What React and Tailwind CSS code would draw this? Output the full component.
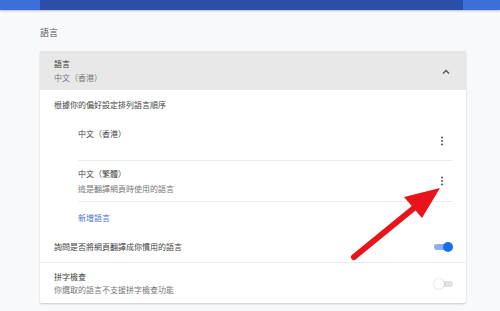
import React from "react";

function Kebab() {
  return (
    <svg width="4" height="10" viewBox="0 0 4 10" className="text-[#5f6368]">
      <circle cx="2" cy="1.5" r="1.1" fill="currentColor" />
      <circle cx="2" cy="5" r="1.1" fill="currentColor" />
      <circle cx="2" cy="8.5" r="1.1" fill="currentColor" />
    </svg>
  );
}

function Toggle({ on }) {
  return on ? (
    <div className="relative h-[10px] w-[19px]">
      <div className="absolute left-0 top-[2px] h-[6px] w-[17px] rounded-full bg-[#8ab0ee]" />
      <div className="absolute right-0 top-0 h-[10px] w-[10px] rounded-full bg-[#1a6fe6]" />
    </div>
  ) : (
    <div className="relative h-[10px] w-[19px]">
      <div className="absolute left-[2px] top-[2px] h-[6px] w-[17px] rounded-full bg-[#e2e2e2]" />
      <div className="absolute left-0 top-0 h-[10px] w-[10px] rounded-full bg-white shadow-[0_0_2px_rgba(0,0,0,0.25)]" />
    </div>
  );
}

export default function App() {
  return (
    <div
      className="relative h-[311px] w-[500px] overflow-hidden bg-[#f8f9fa] text-[#333]"
      style={{ fontFamily: '"Noto Sans CJK TC", "Noto Sans", sans-serif' }}
    >
      {/* top bar */}
      <div className="flex h-[10px] bg-[#3c6fd8] shadow-[0_1px_2px_rgba(0,0,0,0.25)]">
        <div className="ml-[40px] h-full w-[423px] bg-[#2b4ea9]" />
      </div>

      <div className="ml-[40px] w-[426px]">
        <div className="flex h-[41px] items-center pt-[4px] text-[9px] text-[#555]">語言</div>

        <div className="rounded-[2px] bg-white shadow-[0_1px_2px_rgba(0,0,0,0.2)]">
          {/* header */}
          <div className="flex h-[39px] items-center bg-[#e8e8e8] pl-[14px] pr-[16px]">
            <div className="flex flex-col leading-[14px]">
              <span className="text-[8px] text-[#333]">語言</span>
              <span className="text-[8px] text-[#777]">中文（香港）</span>
            </div>
            <svg width="8" height="6" viewBox="0 0 8 6" className="ml-auto mt-[2px] text-[#555]">
              <path d="M1 4.5 L4 1.5 L7 4.5" fill="none" stroke="currentColor" strokeWidth="1.4" />
            </svg>
          </div>

          {/* order hint */}
          <div className="flex h-[30px] items-center pl-[14px] text-[8px] text-[#444]">
            根據你的偏好設定排列語言順序
          </div>

          {/* items */}
          <div className="ml-[38px] mr-[13px]">
            <div className="flex h-[41px] border-b border-[#ececec]">
              <div className="pt-[8px] text-[8px] text-[#444]">中文（香港）</div>
              <div className="ml-auto mr-[9px] pt-[16px]">
                <Kebab />
              </div>
            </div>
            <div className="flex h-[41px] items-center border-b border-[#ececec]">
              <div className="flex flex-col leading-[15px]">
                <span className="text-[8px] text-[#444]">中文（繁體）</span>
                <span className="text-[8px] text-[#777]">這是翻譯網頁時使用的語言</span>
              </div>
              <div className="ml-auto mr-[9px] flex items-center">
                <Kebab />
              </div>
            </div>
            <div className="flex h-[30px] items-center pt-[1px] text-[8px] text-[#4a76cc]">新增語言</div>
          </div>

          {/* translate toggle */}
          <div className="flex h-[31px] items-center border-b border-[#ececec] pl-[14px] pr-[13px]">
            <span className="text-[8px] text-[#444]">詢問是否將網頁翻譯成你慣用的語言</span>
            <div className="ml-auto">
              <Toggle on />
            </div>
          </div>

          {/* spellcheck */}
          <div className="flex h-[40px] items-center pl-[14px] pr-[13px]">
            <div className="flex flex-col leading-[13px]">
              <span className="text-[8px] text-[#444]">拼字檢查</span>
              <span className="text-[8px] text-[#777]">你選取的語言不支援拼字檢查功能</span>
            </div>
            <div className="ml-auto mt-[2px]">
              <Toggle />
            </div>
          </div>
        </div>
      </div>

      {/* annotation arrow */}
      <svg className="pointer-events-none absolute left-0 top-0" width="500" height="311" viewBox="0 0 500 311">
        <line x1="354" y1="257" x2="414" y2="208" stroke="#e8141a" strokeWidth="6" strokeLinecap="round" />
        <polygon points="440,188 404,197 422,218" fill="#e8141a" />
      </svg>
    </div>
  );
}
